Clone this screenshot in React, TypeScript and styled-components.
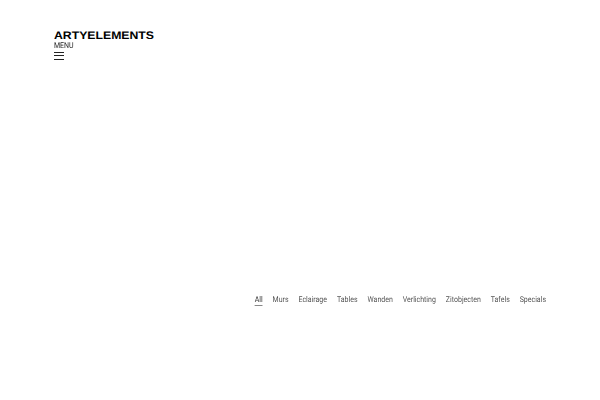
import styled, { createGlobalStyle } from "styled-components";

const GlobalStyle = createGlobalStyle`
	html, body {
		margin: 0;
		padding: 0;
		background: #fff;
		font-family: Roboto, "Liberation Sans", sans-serif;
		text-rendering: geometricPrecision;
	}
`;

const Page = styled.div`
	width: 600px;
	height: 400px;
	overflow: hidden;
	box-sizing: border-box;
	padding: 29px 54px 0;
	display: flex;
	flex-direction: column;
`;

const Header = styled.header`
	display: flex;
	flex-direction: column;
	align-items: flex-start;
`;

const LogoMark = styled.svg`
	display: block;
	width: 100px;
	height: 12px;
`;

const LogoText = styled.text`
	font-family: "Liberation Sans", sans-serif;
	font-weight: 700;
	font-size: 11px;
	fill: #000;
`;

const MenuButton = styled.div`
	display: flex;
	flex-direction: column;
	color: #222;
	font-size: 8px;
	line-height: 10px;
`;

const MenuLabel = styled.span`
	display: block;
	transform: scaleX(0.875);
	transform-origin: left center;
	filter: blur(0.2px);
`;

const Burger = styled.div`
	width: 10px;
	margin-top: 0.5px;
	display: flex;
	flex-direction: column;
	gap: 2.5px;
`;

const BurgerLine = styled.span`
	display: block;
	height: 1px;
	background: #222;
`;

const FilterBar = styled.nav`
	margin-top: 235px;
	display: flex;
	justify-content: flex-end;
	gap: 11.4px;
	transform: scaleX(0.875);
	transform-origin: right center;
	filter: blur(0.2px);
`;

const FilterItem = styled.a<{ $active?: boolean }>`
	font-size: 8px;
	line-height: 10px;
	color: ${props => (props.$active ? "#333" : "#555")};
	border-bottom: 1px solid ${props => (props.$active ? "#888" : "transparent")};
`;

const filters = ["All", "Murs", "Eclairage", "Tables", "Wanden", "Verlichting", "Zitobjecten", "Tafels", "Specials"];

function App() {
	return (
		<Page>
			<GlobalStyle />
			<Header>
				<LogoMark viewBox="0 0 100 12">
					<LogoText x="0" y="10" textLength={100} lengthAdjust="spacingAndGlyphs">ARTYELEMENTS</LogoText>
				</LogoMark>
				<MenuButton>
					<MenuLabel>MENU</MenuLabel>
					<Burger>
						<BurgerLine />
						<BurgerLine />
						<BurgerLine />
					</Burger>
				</MenuButton>
			</Header>
			<FilterBar>
				{filters.map((name, i) => (
					<FilterItem key={name} $active={i === 0}>{name}</FilterItem>
				))}
			</FilterBar>
		</Page>
	);
}

export default App;
